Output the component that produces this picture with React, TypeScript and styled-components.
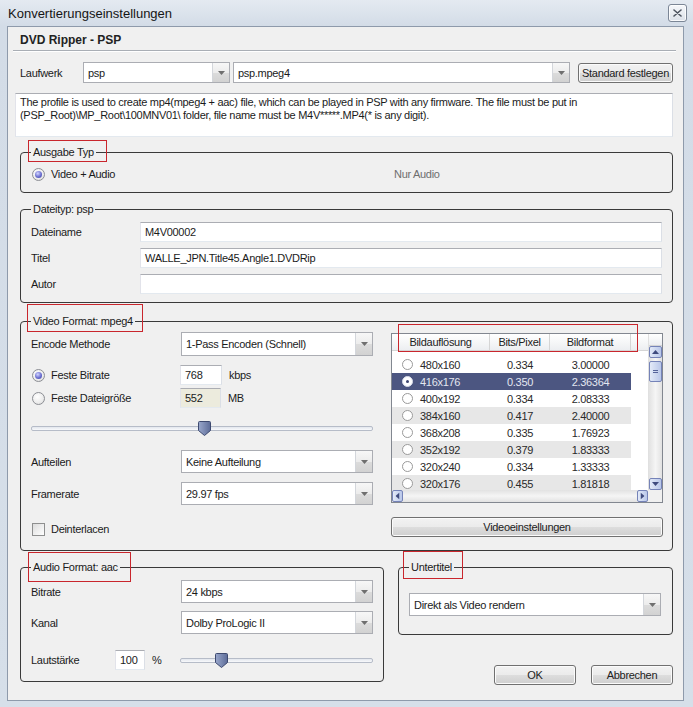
import React from "react";
import styled, { createGlobalStyle, css } from "styled-components";

const GlobalStyle = createGlobalStyle`
  * { box-sizing: border-box; }
  html, body { margin: 0; padding: 0; background: #d5dee9; }
  body {
    font-family: "Liberation Sans", Arial, sans-serif;
    font-size: 11px;
    letter-spacing: -0.3px;
    color: #1b1b1b;
  }
`;

// --- window frame ---
const WindowFrame = styled.div`
  width: 693px;
  height: 707px;
  display: flex;
  flex-direction: column;
  background: linear-gradient(180deg, #e4eaf1 0px, #d3dce7 26px, #d6dfe9 100%);
`;

const TitleBar = styled.div`
  height: 26px;
  flex-shrink: 0;
  display: flex;
  align-items: center;
  justify-content: space-between;
  padding: 0 6px 0 8px;
`;

const TitleText = styled.span`
  font-size: 13px;
  letter-spacing: 0;
  color: #151515;
`;

const CloseButton = styled.div`
  width: 19px;
  height: 18px;
  border: 1px solid #7b8696;
  border-radius: 3px;
  background: linear-gradient(#f6f8fb, #dbe1e9);
  box-shadow: inset 0 0 0 1px rgba(255, 255, 255, 0.8);
  display: flex;
  align-items: center;
  justify-content: center;
`;

const Panel = styled.div`
  flex: 1;
  margin: 0 9px 6px 7px;
  border: 1px solid #8e9aab;
  background: #f0f0f0;
  padding: 6px 10px 0 12px;
  display: flex;
  flex-direction: column;
`;

const ProfileTitle = styled.div`
  font-size: 12px;
  font-weight: bold;
  line-height: 14px;
  letter-spacing: 0;
  color: #222;
`;

const Separator = styled.div`
  margin: 3px -3px 0 -7px;
  height: 2px;
  border-top: 1px solid #a9aeb5;
  border-bottom: 1px solid #ffffff;
`;

// --- controls ---
const Row = styled.div<{ $mt?: number; $h?: number }>`
  display: flex;
  align-items: center;
  margin-top: ${(p) => p.$mt ?? 0}px;
  height: ${(p) => p.$h ?? 20}px;
  flex-shrink: 0;
`;

const Label = styled.span<{ $w: number }>`
  width: ${(p) => p.$w}px;
  flex-shrink: 0;
  white-space: nowrap;
`;

const ComboBox = styled.div<{ $w?: number; $h?: number; $ml?: number }>`
  display: flex;
  height: ${(p) => p.$h ?? 23}px;
  width: ${(p) => (p.$w ? `${p.$w}px` : "100%")};
  margin-left: ${(p) => p.$ml ?? 0}px;
  flex-shrink: 0;
  background: #fff;
  border: 1px solid #abadb3;
`;

const ComboText = styled.span`
  flex: 1;
  display: flex;
  align-items: center;
  padding-left: 4px;
  white-space: nowrap;
  overflow: hidden;
`;

const ComboButton = styled.span`
  width: 17px;
  flex-shrink: 0;
  border-left: 1px solid #d3d6db;
  background: linear-gradient(#f7f7f7, #ececec 50%, #dcdcdc 51%, #d2d2d2);
  display: flex;
  align-items: center;
  justify-content: center;
`;

const TextBox = styled.div<{ $w?: number; $bg?: string; $pl?: number }>`
  height: 100%;
  width: ${(p) => (p.$w ? `${p.$w}px` : "100%")};
  flex-shrink: 0;
  background: ${(p) => p.$bg ?? "#fff"};
  border: 1px solid;
  border-color: #abadb3 #dbdfe6 #e3e9ef #e2e3ea;
  padding-left: ${(p) => p.$pl ?? 4}px;
  display: flex;
  align-items: center;
  white-space: nowrap;
`;

const Button = styled.div<{ $w?: number; $h?: number; $ml?: number }>`
  width: ${(p) => (p.$w ? `${p.$w}px` : "100%")};
  height: ${(p) => p.$h ?? 20}px;
  margin-left: ${(p) => p.$ml ?? 0}px;
  flex-shrink: 0;
  border: 1px solid #707070;
  border-radius: 3px;
  background: linear-gradient(#f2f2f2 0%, #ebebeb 50%, #dddddd 51%, #cfcfcf 100%);
  box-shadow: inset 0 0 0 1px #fbfbfb;
  display: flex;
  align-items: center;
  justify-content: center;
  color: #222;
  white-space: nowrap;
`;

const Radio = styled.span<{ $checked?: boolean }>`
  position: relative;
  width: 13px;
  height: 13px;
  flex-shrink: 0;
  border-radius: 50%;
  border: 1px solid #8c8e94;
  background: radial-gradient(circle at 40% 35%, #ffffff, #ececec 60%, #d3d3d3);
  ${(p) =>
    p.$checked &&
    css`
      &::after {
        content: "";
        position: absolute;
        left: 2px;
        top: 2px;
        width: 7px;
        height: 7px;
        border-radius: 50%;
        background: radial-gradient(circle at 40% 35%, #d3d5ff, #6b6fd0 55%, #3f4199);
      }
    `}
`;

const CheckBox = styled.span`
  width: 13px;
  height: 13px;
  flex-shrink: 0;
  border: 1px solid #8e8f8f;
  background: linear-gradient(135deg, #dcdcdc, #ffffff);
`;

const Option = styled.div<{ $disabled?: boolean }>`
  display: flex;
  align-items: center;
  gap: 6px;
  padding-left: 1px;
  color: ${(p) => (p.$disabled ? "#6e6e6e" : "#1b1b1b")};
  white-space: nowrap;
`;

const Unit = styled.span<{ $w: number }>`
  width: ${(p) => p.$w}px;
  padding-left: 7px;
  flex-shrink: 0;
`;

// --- slider ---
const SliderWrap = styled.div<{ $w?: number }>`
  position: relative;
  width: ${(p) => (p.$w ? `${p.$w}px` : "100%")};
  height: 15px;
  display: flex;
  align-items: center;
  flex-shrink: 0;
`;

const Track = styled.div`
  width: 100%;
  height: 5px;
  border: 1px solid #b6bcc8;
  border-radius: 2px;
  background: linear-gradient(#e3e7ee, #f8f9fb);
`;

const ThumbSvg = styled.svg<{ $left: number }>`
  position: absolute;
  top: 0;
  left: ${(p) => p.$left}px;
`;

const SliderThumb = ({ left }: { left: number }) => (
  <ThumbSvg $left={left} width="13" height="15" viewBox="0 0 13 15">
    <defs>
      <linearGradient id="thumbFill" x1="0" y1="0" x2="1" y2="0">
        <stop offset="0" stopColor="#9aa8cc" />
        <stop offset="1" stopColor="#5d6c98" />
      </linearGradient>
    </defs>
    <path d="M1.5 0.5 H11.5 a1 1 0 0 1 1 1 V9.5 L6.5 14.5 L0.5 9.5 V1.5 a1 1 0 0 1 1 -1 Z" fill="url(#thumbFill)" stroke="#3e4a70" />
  </ThumbSvg>
);

// --- arrows ---
const ArrowSvg = styled.svg<{ $rot: number }>`
  transform: rotate(${(p) => p.$rot}deg);
`;

const Arrow = ({ dir, color }: { dir: "up" | "down" | "left" | "right"; color: string }) => {
  const rot = { down: 0, up: 180, left: 90, right: -90 }[dir];
  return (
    <ArrowSvg $rot={rot} width="7" height="4" viewBox="0 0 7 4">
      <path d="M0 0 H7 L3.5 4 Z" fill={color} />
    </ArrowSvg>
  );
};

const Combo = ({ value, w, h, ml }: { value: string; w?: number; h?: number; ml?: number }) => (
  <ComboBox $w={w} $h={h} $ml={ml}>
    <ComboText>{value}</ComboText>
    <ComboButton>
      <Arrow dir="down" color="#6f6f6f" />
    </ComboButton>
  </ComboBox>
);

// --- group boxes ---
const Group = styled.fieldset<{ $mt: number; $pad: string }>`
  margin: ${(p) => p.$mt}px 0 0 0;
  padding: ${(p) => p.$pad};
  border: 1px solid #3a3a3a;
  border-radius: 4px;
  min-width: 0;
`;

const Legend = styled.legend`
  position: relative;
  padding: 0 2px;
  line-height: 14px;
  white-space: nowrap;
`;

// rote Markierungen im Screenshot
const Mark = styled.span<{ $l: number; $t: number; $w: number; $h: number }>`
  position: absolute;
  left: ${(p) => p.$l}px;
  top: ${(p) => p.$t}px;
  width: ${(p) => p.$w}px;
  height: ${(p) => p.$h}px;
  border: 1.5px solid #c9262d;
  pointer-events: none;
`;

const DescBox = styled.div`
  margin: 10px 0 0 -5px;
  height: 44px;
  flex-shrink: 0;
  background: #fff;
  border: 1px solid;
  border-color: #abadb3 #dbdfe6 #e3e9ef #e2e3ea;
  padding: 2px 4px;
  line-height: 13px;
  white-space: nowrap;
`;

const OutputRow = styled.div`
  display: grid;
  grid-template-columns: 362px 1fr;
  align-items: center;
  height: 14px;
`;

const FieldGrid = styled.div`
  display: grid;
  grid-template-columns: 109px 1fr;
  grid-auto-rows: 20px;
  row-gap: 6px;
  align-items: center;
`;

const VideoLayout = styled.div`
  display: grid;
  grid-template-columns: 342px 272px;
  column-gap: 18px;
  align-items: start;
`;

const Column = styled.div`
  display: flex;
  flex-direction: column;
`;

// --- list view ---
const ListBox = styled.div`
  position: relative;
  margin-top: 1px;
  height: 170px;
  border: 1px solid #828790;
  background: #fff;
  display: grid;
  grid-template-columns: 1fr 14px;
  grid-template-rows: 1fr 12px;
`;

const ListBody = styled.div`
  overflow: hidden;
`;

const HeaderRow = styled.div`
  display: grid;
  grid-template-columns: 98px 60px 81px 1fr;
  height: 17px;
  background: linear-gradient(#ffffff, #f6f7f8 50%, #eceef1);
  border-bottom: 1px solid #d5d5d5;
`;

const HeaderCell = styled.div`
  display: flex;
  align-items: center;
  justify-content: center;
  border-right: 1px solid #d5d5d5;
  color: #222;
  &:last-child {
    border-right: none;
  }
`;

const Rows = styled.div`
  padding-top: 5px;
`;

const DataRow = styled.div<{ $alt: boolean; $sel: boolean }>`
  display: grid;
  grid-template-columns: 98px 60px 81px;
  width: 239px;
  height: 17px;
  align-items: center;
  background: ${(p) => (p.$sel ? "#4c5681" : p.$alt ? "#e7e7e7" : "#fff")};
  color: ${(p) => (p.$sel ? "#e3e7f1" : "#2a2a2a")};
`;

const ResCell = styled.div`
  display: flex;
  align-items: center;
  gap: 7px;
  padding-left: 10px;
`;

const NumCell = styled.div`
  text-align: center;
`;

const SmallRadio = styled.span<{ $checked: boolean }>`
  position: relative;
  width: 11px;
  height: 11px;
  border-radius: 50%;
  border: 1px solid ${(p) => (p.$checked ? "#d8dcea" : "#9a9a9a")};
  background: #fff;
  ${(p) =>
    p.$checked &&
    css`
      &::after {
        content: "";
        position: absolute;
        left: 3px;
        top: 3px;
        width: 3px;
        height: 3px;
        border-radius: 50%;
        background: #3d4570;
      }
    `}
`;

const VScroll = styled.div`
  display: flex;
  flex-direction: column;
  background: linear-gradient(90deg, #e2e2e2, #f5f5f5 50%, #e2e2e2);
  border-left: 1px solid #e0e0e0;
`;

const ScrollCap = styled.div`
  height: 12px;
  flex-shrink: 0;
  background: linear-gradient(#ffffff, #eceef1);
  border-bottom: 1px solid #d5d5d5;
`;

const ScrollBtn = styled.div<{ $w?: number; $h?: number }>`
  width: ${(p) => (p.$w ? `${p.$w}px` : "100%")};
  height: ${(p) => (p.$h ? `${p.$h}px` : "100%")};
  flex-shrink: 0;
  border: 1px solid #7583b8;
  border-radius: 2px;
  background: linear-gradient(90deg, #e3eaf8, #b9c7e9);
  display: flex;
  align-items: center;
  justify-content: center;
`;

const ScrollThumb = styled(ScrollBtn)`
  margin-top: 3px;
  flex-direction: column;
  gap: 1px;
  &::before,
  &::after {
    content: "";
    width: 5px;
    height: 1px;
    background: #55639a;
  }
`;

const Spacer = styled.div`
  flex: 1;
`;

const HScroll = styled.div`
  display: flex;
  align-items: stretch;
  background: linear-gradient(#e2e2e2, #f5f5f5 50%, #e2e2e2);
`;

const ScrollCorner = styled.div`
  background: #f0f0f0;
`;

// --- bottom ---
const BottomGrid = styled.div`
  display: grid;
  grid-template-columns: 364px 275px;
  column-gap: 14px;
  align-items: start;
`;

const ButtonBar = styled.div`
  display: flex;
  justify-content: flex-end;
  gap: 15px;
  margin-top: 30px;
`;

const resolutions = [
  { res: "480x160", bpp: "0.334", fmt: "3.00000" },
  { res: "416x176", bpp: "0.350", fmt: "2.36364" },
  { res: "400x192", bpp: "0.334", fmt: "2.08333" },
  { res: "384x160", bpp: "0.417", fmt: "2.40000" },
  { res: "368x208", bpp: "0.335", fmt: "1.76923" },
  { res: "352x192", bpp: "0.379", fmt: "1.83333" },
  { res: "320x240", bpp: "0.334", fmt: "1.33333" },
  { res: "320x176", bpp: "0.455", fmt: "1.81818" },
];

const App = () => {
  const selected = 1;

  return (
    <>
      <GlobalStyle />
      <WindowFrame>
        <TitleBar>
          <TitleText>Konvertierungseinstellungen</TitleText>
          <CloseButton>
            <svg width="9" height="8" viewBox="0 0 9 8">
              <path d="M1 1 L8 7 M8 1 L1 7" stroke="#4d5460" strokeWidth="1.6" strokeLinecap="round" />
            </svg>
          </CloseButton>
        </TitleBar>

        <Panel>
          <ProfileTitle>DVD Ripper - PSP</ProfileTitle>
          <Separator />

          <Row $mt={10} $h={21}>
            <Label $w={63}>Laufwerk</Label>
            <Combo value="psp" w={147} h={21} />
            <Combo value="psp.mpeg4" w={337} h={21} ml={3} />
            <Button $w={95} $h={20} $ml={8}>
              Standard festlegen
            </Button>
          </Row>

          <DescBox>
            The profile is used to create mp4(mpeg4 + aac) file, which can be played in PSP with any firmware. The file must be put in
            <br />
            (PSP_Root)\MP_Root\100MNV01\ folder, file name must be M4V*****.MP4(* is any digit).
          </DescBox>

          <Group $mt={8} $pad="8px 9px 11px 10px">
            <Legend>
              Ausgabe Typ
              <Mark $l={-3} $t={-5} $w={79} $h={22} />
            </Legend>
            <OutputRow>
              <Option>
                <Radio $checked />
                Video + Audio
              </Option>
              <Option $disabled>Nur Audio</Option>
            </OutputRow>
          </Group>

          <Group $mt={9} $pad="6px 10px 8px 10px">
            <Legend>Dateityp: psp</Legend>
            <FieldGrid>
              <span>Dateiname</span>
              <TextBox>M4V00002</TextBox>
              <span>Titel</span>
              <TextBox>WALLE_JPN.Title45.Angle1.DVDRip</TextBox>
              <span>Autor</span>
              <TextBox />
            </FieldGrid>
          </Group>

          <Group $mt={11} $pad="4px 9px 13px 10px">
            <Legend>
              Video Format: mpeg4
              <Mark $l={-4} $t={-10} $w={116} $h={28} />
            </Legend>
            <VideoLayout>
              <Column>
                <Row $h={24}>
                  <Label $w={150}>Encode Methode</Label>
                  <Combo value="1-Pass Encoden (Schnell)" w={192} h={24} />
                </Row>
                <Row $mt={9} $h={20}>
                  <Label $w={149}>
                    <Option>
                      <Radio $checked />
                      Feste Bitrate
                    </Option>
                  </Label>
                  <TextBox $w={42} $pl={4}>768</TextBox>
                  <Unit $w={40}>kbps</Unit>
                </Row>
                <Row $mt={3} $h={20}>
                  <Label $w={149}>
                    <Option>
                      <Radio />
                      Feste Dateigröße
                    </Option>
                  </Label>
                  <TextBox $w={41} $pl={4} $bg="#ecebdd">552</TextBox>
                  <Unit $w={40}>MB</Unit>
                </Row>
                <Row $mt={13} $h={15}>
                  <SliderWrap>
                    <Track />
                    <SliderThumb left={167} />
                  </SliderWrap>
                </Row>
                <Row $mt={14} $h={23}>
                  <Label $w={150}>Aufteilen</Label>
                  <Combo value="Keine Aufteilung" w={192} h={23} />
                </Row>
                <Row $mt={9} $h={23}>
                  <Label $w={150}>Framerate</Label>
                  <Combo value="29.97 fps" w={192} h={23} />
                </Row>
                <Row $mt={17} $h={14}>
                  <Option>
                    <CheckBox />
                    Deinterlacen
                  </Option>
                </Row>
              </Column>

              <Column>
                <ListBox>
                  <Mark $l={6} $t={-10} $w={240} $h={28} />
                  <ListBody>
                    <HeaderRow>
                      <HeaderCell>Bildauflösung</HeaderCell>
                      <HeaderCell>Bits/Pixel</HeaderCell>
                      <HeaderCell>Bildformat</HeaderCell>
                      <HeaderCell />
                    </HeaderRow>
                    <Rows>
                      {resolutions.map((r, i) => (
                        <DataRow key={r.res} $alt={i % 2 === 1} $sel={i === selected}>
                          <ResCell>
                            <SmallRadio $checked={i === selected} />
                            {r.res}
                          </ResCell>
                          <NumCell>{r.bpp}</NumCell>
                          <NumCell>{r.fmt}</NumCell>
                        </DataRow>
                      ))}
                    </Rows>
                  </ListBody>
                  <VScroll>
                    <ScrollCap />
                    <ScrollBtn $h={12}>
                      <Arrow dir="up" color="#3f4b7e" />
                    </ScrollBtn>
                    <ScrollThumb $h={21} />
                    <Spacer />
                    <ScrollBtn $h={12}>
                      <Arrow dir="down" color="#3f4b7e" />
                    </ScrollBtn>
                  </VScroll>
                  <HScroll>
                    <ScrollBtn $w={11}>
                      <Arrow dir="left" color="#3f4b7e" />
                    </ScrollBtn>
                    <Spacer />
                    <ScrollBtn $w={11}>
                      <Arrow dir="right" color="#3f4b7e" />
                    </ScrollBtn>
                  </HScroll>
                  <ScrollCorner />
                </ListBox>
                <Row $mt={14} $h={20}>
                  <Button>Videoeinstellungen</Button>
                </Row>
              </Column>
            </VideoLayout>
          </Group>

          <BottomGrid>
            <Group $mt={9} $pad="6px 10px 11px 10px">
              <Legend>
                Audio Format: aac
                <Mark $l={-3} $t={-8} $w={103} $h={30} />
              </Legend>
              <Row $h={23}>
                <Label $w={150}>Bitrate</Label>
                <Combo value="24 kbps" w={192} />
              </Row>
              <Row $mt={8} $h={23}>
                <Label $w={150}>Kanal</Label>
                <Combo value="Dolby ProLogic II" w={192} />
              </Row>
              <Row $mt={16} $h={20}>
                <Label $w={84}>Lautstärke</Label>
                <TextBox $w={30} $pl={4}>100</TextBox>
                <Unit $w={35}>%</Unit>
                <SliderWrap $w={193}>
                  <Track />
                  <SliderThumb left={35} />
                </SliderWrap>
              </Row>
            </Group>

            <Column>
              <Group $mt={9} $pad="19px 11px 18px 10px">
                <Legend>
                  Untertitel
                  <Mark $l={-6} $t={-9} $w={60} $h={28} />
                </Legend>
                <Combo value="Direkt als Video rendern" h={23} />
              </Group>
              <ButtonBar>
                <Button $w={82} $h={20}>OK</Button>
                <Button $w={82} $h={20}>Abbrechen</Button>
              </ButtonBar>
            </Column>
          </BottomGrid>
        </Panel>
      </WindowFrame>
    </>
  );
};

export default App;
